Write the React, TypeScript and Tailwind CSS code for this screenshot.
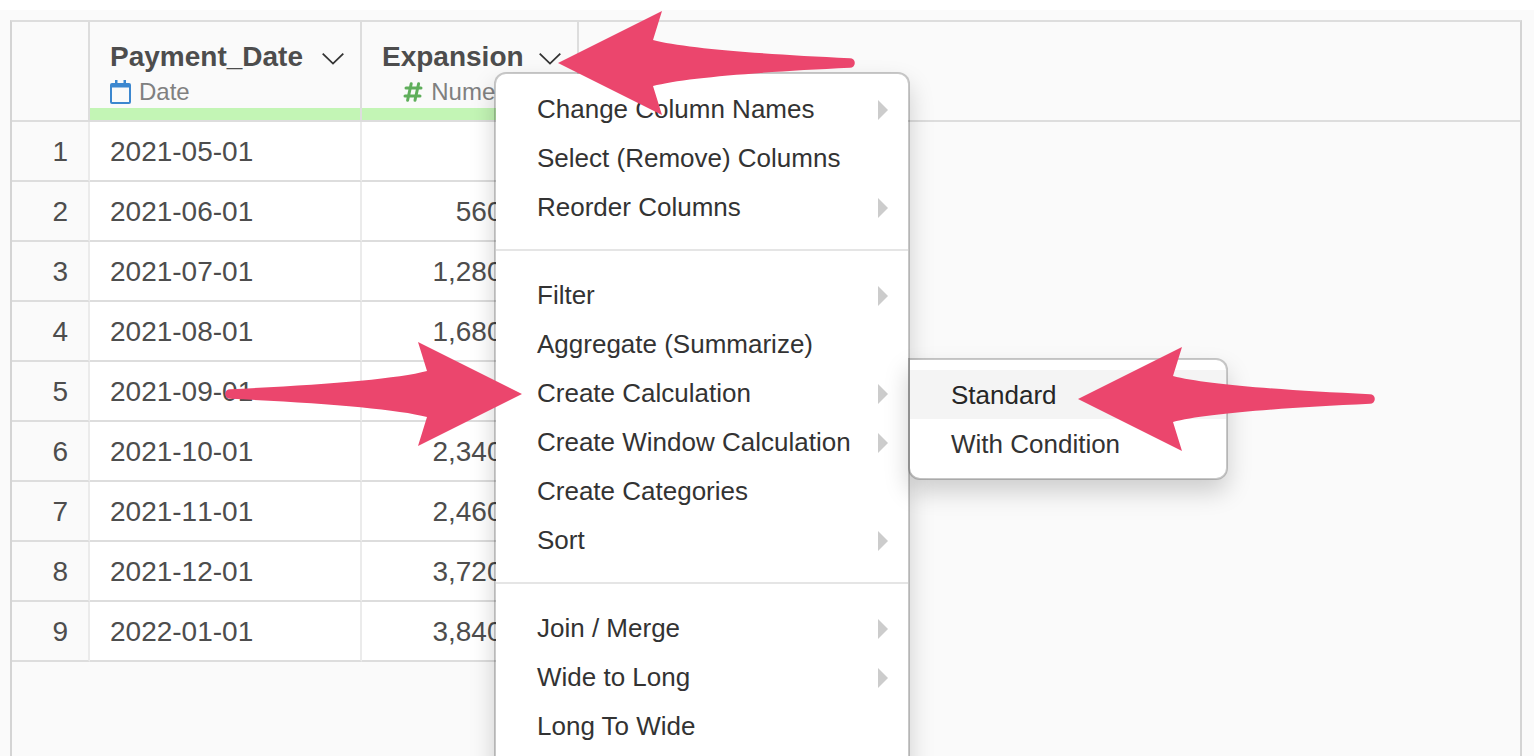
import { Fragment } from "react";

const rows = [
  { date: "2021-05-01", expansion: "" },
  { date: "2021-06-01", expansion: "560,000" },
  { date: "2021-07-01", expansion: "1,280,000" },
  { date: "2021-08-01", expansion: "1,680,000" },
  { date: "2021-09-01", expansion: "2,000,000" },
  { date: "2021-10-01", expansion: "2,340,000" },
  { date: "2021-11-01", expansion: "2,460,000" },
  { date: "2021-12-01", expansion: "3,720,000" },
  { date: "2022-01-01", expansion: "3,840,000" },
];

type Item = { label: string; more?: boolean; children?: string[] };

const menuGroups: Item[][] = [
  [
    { label: "Change Column Names", more: true },
    { label: "Select (Remove) Columns" },
    { label: "Reorder Columns", more: true },
  ],
  [
    { label: "Filter", more: true },
    { label: "Aggregate (Summarize)" },
    { label: "Create Calculation", more: true, children: ["Standard", "With Condition"] },
    { label: "Create Window Calculation", more: true },
    { label: "Create Categories" },
    { label: "Sort", more: true },
  ],
  [
    { label: "Join / Merge", more: true },
    { label: "Wide to Long", more: true },
    { label: "Long To Wide" },
  ],
];

const Chevron = () => (
  <svg width="22" height="12" viewBox="0 0 22 12" fill="none" stroke="#333" strokeWidth="1.8">
    <path d="M0.7 0.7 L11 10.6 L21.3 0.7" />
  </svg>
);

const CalendarIcon = () => (
  <svg width="21" height="24" viewBox="0 0 21 24" fill="#3c87cf">
    <path
      fillRule="evenodd"
      d="M5 0h2.5v3h6V0H16v3h3a2 2 0 0 1 2 2v17a2 2 0 0 1-2 2H2a2 2 0 0 1-2-2V5a2 2 0 0 1 2-2h3zM2 7.5V22h17V7.5z"
    />
  </svg>
);

const HashIcon = () => (
  <svg width="20" height="20" viewBox="0 0 20 20" fill="none" stroke="#5fae5b" strokeWidth="3" strokeLinecap="round">
    <path d="M8.2 1.8 L4.6 18.2 M15.6 1.8 L12 18.2 M3 6 H18 M2 14 H17" />
  </svg>
);

const Arrow = ({ className }: { className: string }) => (
  <svg width="298" height="104" viewBox="0 0 298 104" fill="#eb466d" className={`absolute z-30 pointer-events-none ${className}`}>
    <path d="M0 52 L104 0 L95 29 C125 37 200 43 292 47.2 A4.8 4.8 0 0 1 292 56.8 C200 61 125 67 95 75 L104 104 Z" />
  </svg>
);

const Submenu = ({ items }: { items: string[] }) => (
  <ul className="absolute left-full -top-2.5 z-20 w-80 py-2.5 bg-white bg-clip-padding border-2 border-black/20 rounded-xl rounded-tl-none shadow-[0_12px_24px_rgba(0,0,0,0.175)]">
    {items.map((label, i) => (
      <li key={label}>
        <button className={`block w-full h-[49px] pt-0.5 pl-[41px] pr-5 text-left ${i === 0 ? "bg-[#f4f4f4] text-[#262626]" : ""}`}>
          {label}
        </button>
      </li>
    ))}
  </ul>
);

const ColumnMenu = () => (
  <div className="absolute left-[132px] top-[50px] z-10 w-[416px] pt-2.5 pb-16 bg-white bg-clip-padding border-2 border-black/20 rounded-xl shadow-[0_12px_24px_rgba(0,0,0,0.175)] text-[26px] font-normal text-[#333] text-left">
    {menuGroups.map((group, i) => (
      <Fragment key={i}>
        {i > 0 && <hr className="mt-[18px] mb-[19px] border-t-2 border-[#e5e5e5]" />}
        <ul>
          {group.map((item) => (
            <li key={item.label} className="relative">
              <button className="flex items-center justify-between w-full h-[49px] pt-0.5 pl-[41px] pr-5 whitespace-nowrap">
                {item.label}
                {item.more && (
                  <svg width="10" height="20" viewBox="0 0 10 20" fill="#ccc">
                    <path d="M0 0 L10 10 L0 20 Z" />
                  </svg>
                )}
              </button>
              {item.children && <Submenu items={item.children} />}
            </li>
          ))}
        </ul>
      </Fragment>
    ))}
  </div>
);

const ColumnHeader = ({ name, type, icon, alignRight = false }) => (
  <>
    <div className="flex items-start justify-between h-[86px] pt-[17px] pl-5 pr-4">
      <div>
        <div className="text-[28px] leading-9 font-bold text-[#4d4d4d]">{name}</div>
        <div className={`flex items-center gap-2 h-[34px] text-2xl font-normal text-[#808080] ${alignRight ? "justify-end pr-[3px]" : ""}`}>
          {icon}
          {type}
        </div>
      </div>
      <button aria-label={`${name} menu`} className="flex items-center h-10">
        <Chevron />
      </button>
    </div>
    <div className="h-3 bg-[#c3f5b5]" />
  </>
);

export default function App() {
  return (
    <div className="relative h-screen overflow-hidden bg-[#fafafa] border-t-10 border-white px-2.5 pt-2.5 pr-3 font-['Liberation_Sans',Arial,sans-serif]">
      <div className="h-full border-2 border-b-0 border-[#d4d4d4] border-t-[#ddd]">
        <table className="w-full table-fixed border-separate border-spacing-0 text-[28px] text-[#4d4d4d]">
          <colgroup>
            <col className="w-[78px]" />
            <col className="w-[272px]" />
            <col className="w-[217px]" />
            <col />
          </colgroup>
          <thead>
            <tr>
              <th className="p-0 border-r-2 border-b-2 border-[#ddd]"></th>
              <th className="p-0 text-left border-r-2 border-b-2 border-[#ddd]">
                <ColumnHeader name="Payment_Date" type="Date" icon={<CalendarIcon />} />
              </th>
              <th className="relative p-0 text-left border-r-2 border-b-2 border-[#ddd]">
                <ColumnHeader name="Expansion" type="Numeric" icon={<HashIcon />} alignRight />
                <ColumnMenu />
              </th>
              <th className="p-0 border-b-2 border-[#ddd]"></th>
            </tr>
          </thead>
          <tbody className="[font-kerning:none]">
            {rows.map((row, i) => (
              <tr key={row.date} className="h-15">
                <td className="p-0 pt-0.5 pr-5 text-right border-r-2 border-b-2 border-r-[#ebebeb] border-b-[#ddd]">{i + 1}</td>
                <td className="p-0 pt-0.5 pl-5 bg-white border-r-2 border-b-2 border-r-[#ebebeb] border-b-[#ddd]">{row.date}</td>
                <td className="p-0 pt-0.5 pr-5 text-right bg-white border-r-2 border-b-2 border-r-[#ebebeb] border-b-[#ddd]">{row.expansion}</td>
                <td className="p-0"></td>
              </tr>
            ))}
          </tbody>
        </table>
      </div>

      <Arrow className="left-[558px] top-px" />
      <Arrow className="left-[224px] top-[332px] -scale-x-100" />
      <Arrow className="left-[1078px] top-[337px]" />
    </div>
  );
}
